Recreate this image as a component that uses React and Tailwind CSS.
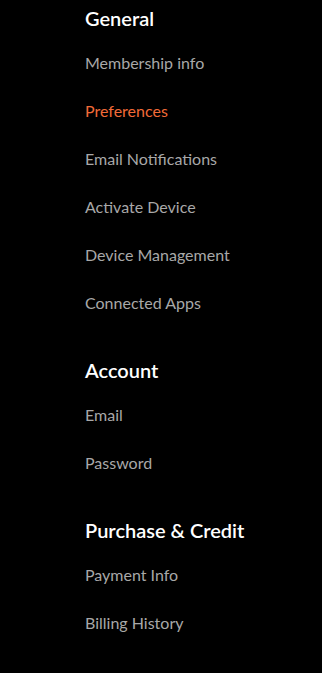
const SECTIONS = [
  {
    title: "General",
    items: [
      "Membership info",
      "Preferences",
      "Email Notifications",
      "Activate Device",
      "Device Management",
      "Connected Apps",
    ],
  },
  { title: "Account", items: ["Email", "Password"] },
  { title: "Purchase & Credit", items: ["Payment Info", "Billing History"] },
];

const ACTIVE = "Preferences";

export default function App() {
  return (
    <div
      className="min-h-[673px] w-full bg-black pl-[85px]"
      style={{ fontFamily: "Lato, 'Open Sans', sans-serif" }}
    >
      <nav className="flex flex-col gap-[29px] pt-[4px]">
        {SECTIONS.map((section) => (
          <div key={section.title}>
            {/* Section heading */}
            <h2 className="mb-[7px] text-[20px] font-semibold leading-[28px] text-white">
              {section.title}
            </h2>
            <ul>
              {section.items.map((item) => (
                <li
                  key={item}
                  className={`flex h-12 items-center text-[16px] ${
                    item === ACTIVE ? "text-[#f26b38]" : "text-[#a8a8a8]"
                  }`}
                >
                  {item}
                </li>
              ))}
            </ul>
          </div>
        ))}
      </nav>
    </div>
  );
}
